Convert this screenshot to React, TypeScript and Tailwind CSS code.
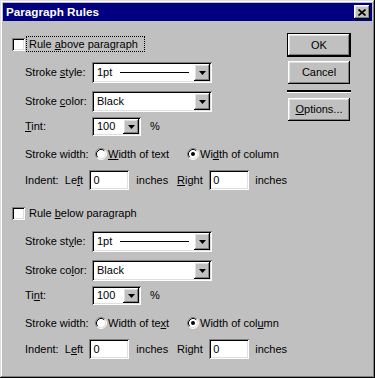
import type { ReactNode } from "react";

const raised =
  "shadow-[inset_-1px_-1px_#000,inset_1px_1px_#fff,inset_-2px_-2px_#808080,inset_2px_2px_#dfdfdf]";
const sunken =
  "shadow-[inset_1px_1px_#808080,inset_-1px_-1px_#fff,inset_2px_2px_#000,inset_-2px_-2px_#dfdfdf]";

function Arrow() {
  return (
    <div className={`w-[16px] h-full bg-[#c0c0c0] ${raised} flex items-center justify-center`}>
      <svg width="7" height="4" viewBox="0 0 7 4">
        <path d="M0 0h7L3.5 4z" fill="#000" />
      </svg>
    </div>
  );
}

function Combo({ w, children }: { w: string; children: ReactNode }) {
  return (
    <div className={`${w} h-full bg-white ${sunken} flex p-[2px]`}>
      <div className="flex-1 flex items-center pl-[3px]">{children}</div>
      <Arrow />
    </div>
  );
}

function Check() {
  return <div className={`w-[13px] h-[13px] bg-white ${sunken} shrink-0`} />;
}

function Radio({ on }: { on?: boolean }) {
  return (
    <svg width="12" height="12" viewBox="0 0 12 12" className="shrink-0">
      <circle cx="6" cy="6" r="5" fill="#fff" />
      <path d="M2.11 9.89A5.5 5.5 0 0 1 9.89 2.11" fill="none" stroke="#808080" />
      <path d="M2.82 9.18A4.5 4.5 0 0 1 9.18 2.82" fill="none" stroke="#000" />
      <path d="M9.89 2.11A5.5 5.5 0 0 1 2.11 9.89" fill="none" stroke="#fff" />
      <path d="M9.18 2.82A4.5 4.5 0 0 1 2.82 9.18" fill="none" stroke="#dfdfdf" />
      {on && <circle cx="6" cy="6" r="2" fill="#000" />}
    </svg>
  );
}

function Field({ w }: { w: string }) {
  return (
    <div className={`${w} h-[20px] bg-white ${sunken} flex items-center pl-[4px]`}>0</div>
  );
}

function Section({ below }: { below?: boolean }) {
  return (
    <div className="flex flex-col">
      <div className="mt-[13px] h-[20px] flex items-center">
        <Check />
        {below ? (
          <span className="ml-[3px] pl-[1px]">
            Rule <u>b</u>elow paragraph
          </span>
        ) : (
          <div className="ml-[1px] h-[16px] flex items-center pl-[2px] pr-[6px] border border-dotted border-black">
            <span>
              Rule <u>a</u>bove paragraph
            </span>
          </div>
        )}
      </div>

      <div className="mt-[8px] h-[21px] flex items-center pl-[13px]">
        <span className="w-[67px]">
          {below ? (
            <>Stroke st<u>y</u>le:</>
          ) : (
            <>Stroke <u>s</u>tyle:</>
          )}
        </span>
        <Combo w="w-[120px]">
          <span>1pt</span>
          <div className="ml-[8px] w-[69px] h-[1px] bg-black" />
        </Combo>
      </div>

      <div className="mt-[8px] h-[21px] flex items-center pl-[13px]">
        <span className="w-[67px]">
          {below ? (
            <>Stroke co<u>l</u>or:</>
          ) : (
            <>Stroke <u>c</u>olor:</>
          )}
        </span>
        <Combo w="w-[120px]">
          <span>Black</span>
        </Combo>
      </div>

      <div className="mt-[5px] h-[19px] flex items-center pl-[13px]">
        <span className="w-[67px]">{below ? <>Ti<u>n</u>t:</> : <><u>T</u>int:</>}</span>
        <Combo w="w-[49px]">
          <span>100</span>
        </Combo>
        <span className="ml-[9px]">%</span>
      </div>

      <div className="mt-[11px] h-[14px] flex items-center pl-[13px]">
        <span className="w-[70px]">Stroke width:</span>
        <div className="w-[92px] flex items-center">
          <Radio />
          <span className="ml-[1px]">
            {below ? (
              <>Width of te<u>x</u>t</>
            ) : (
              <><u>W</u>idth of text</>
            )}
          </span>
        </div>
        <div className="flex items-center">
          <Radio on />
          <span className="ml-[1px]">
            {below ? (
              <>Width of col<u>u</u>mn</>
            ) : (
              <>Wi<u>d</u>th of column</>
            )}
          </span>
        </div>
      </div>

      <div className="mt-[9px] h-[20px] flex items-center pl-[13px]">
        <span className="w-[42px]">Indent:</span>
        <span className="w-[26px]">{below ? <>L<u>e</u>ft</> : <>Le<u>f</u>t</>}</span>
        <Field w="w-[42px]" />
        <span className="ml-[7px] w-[43px]">inches</span>
        <span className="w-[34px]">{below ? <>Ri<u>g</u>ht</> : <><u>R</u>ight</>}</span>
        <Field w="w-[42px]" />
        <span className="ml-[6px]">inches</span>
      </div>
    </div>
  );
}

export default function App() {
  return (
    <div
      className="w-[375px] h-[378px] bg-[#c0c0c0] p-[3px] text-[11px] leading-none text-black shadow-[inset_-1px_-1px_#000,inset_1px_1px_#dfdfdf,inset_-2px_-2px_#808080,inset_2px_2px_#fff] flex flex-col"
      style={{ fontFamily: '"Liberation Sans", Arial, sans-serif' }}
    >
      <div className="h-[18px] bg-[#000080] flex items-center pl-[3px] pr-[2px]">
        <span className="flex-1 text-white font-bold text-[11.7px]">Paragraph Rules</span>
        <div className={`w-[16px] h-[14px] bg-[#c0c0c0] ${raised} flex items-center justify-center`}>
          <svg width="8" height="7" viewBox="0 0 8 7">
            <path d="M0.5 0.5L7.5 6.5M7.5 0.5L0.5 6.5" stroke="#000" strokeWidth="1.7" />
          </svg>
        </div>
      </div>

      <div className="flex">
        <div className="w-[284px] pl-[9px] flex flex-col">
          <Section />
          <Section below />
        </div>

        <div className="w-[64px] flex flex-col">
          <div className="mt-[12px] h-[24px] border border-black">
            <div className={`h-full ${raised} flex items-center justify-center`}>OK</div>
          </div>
          <div className={`mt-[4px] mx-[1px] h-[23px] ${raised} flex items-center justify-center`}>
            Cancel
          </div>
          <div className="mt-[6px] h-[2px] bg-black" />
          <div className="h-[1px] bg-white" />
          <div className={`mt-[5px] mx-[1px] h-[23px] ${raised} flex items-center justify-center`}>
            <span>
              <u>O</u>ptions...
            </span>
          </div>
        </div>
      </div>
    </div>
  );
}
